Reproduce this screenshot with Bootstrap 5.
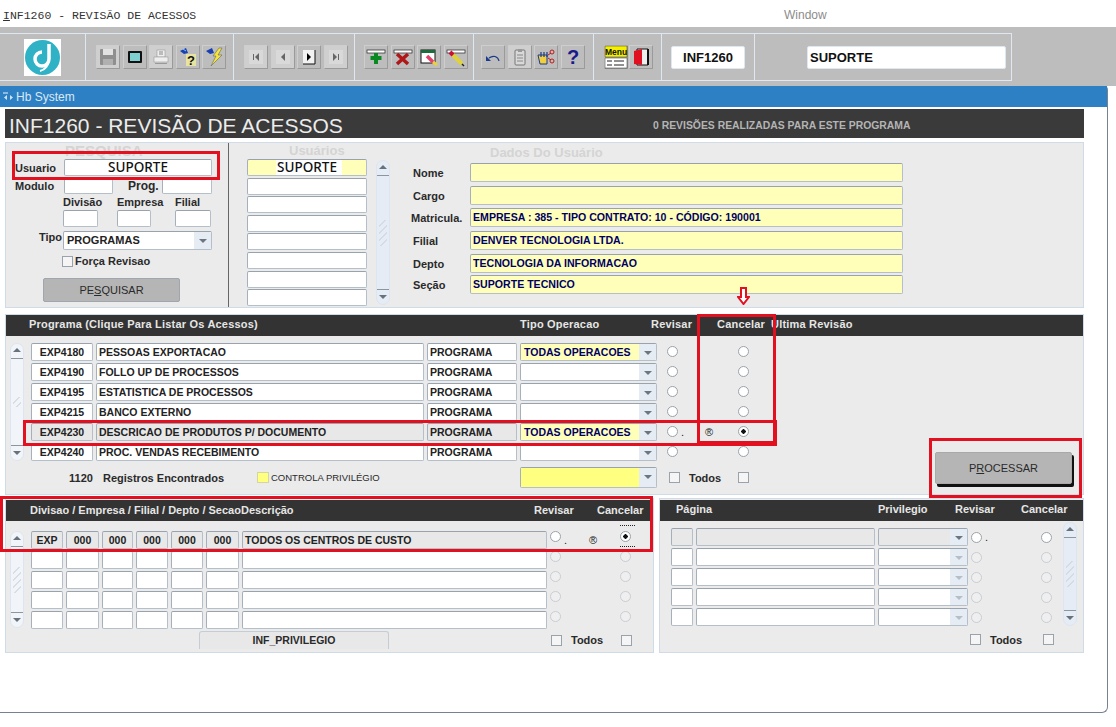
<!DOCTYPE html>
<html lang="en">
<head>
  <meta charset="UTF-8">
  <meta name="viewport" content="width=device-width, initial-scale=1.0">
  <title>INF1260 - Revisão de Acessos</title>
  <link href="https://cdn.jsdelivr.net/npm/bootstrap@5.3.0/dist/css/bootstrap.min.css" rel="stylesheet">
  <style>
    html, body { margin: 0; background: #fff; overflow: hidden; }
    #app { position: relative; width: 1116px; height: 727px; overflow: hidden; font: bold 11px "Liberation Sans", Arial, sans-serif; color: #2a2a2a; }

    .titlebar { height: 27px; align-items: center; padding: 3px 0 0 3px; font-weight: normal; }
    .titlebar .apptitle { width: 781px; font: 11.5px "Liberation Mono", monospace; color: #333; }
    .titlebar .winmenu { font: 12px "Liberation Sans", sans-serif; color: #8c8c8c; }

    .toolbar-wrap { height: 59px; background: #bdbdbd; padding-top: 6px; }
    .toolbar-in { width: 1012px; height: 48px; border: solid #dfe7f0; border-width: 1px 1px 1px 0; }
    .tgroup { height: 100%; border-right: 1px solid #dfe7f0; align-items: center; flex: none; gap: 2.5px; }
    .tg1 { width: 86px; padding-left: 24px; }
    .tg2 { width: 148px; padding-left: 10px; }
    .tg3 { width: 121px; padding-left: 10px; }
    .tg4 { width: 119px; padding-left: 9px; }
    .tg5 { width: 120px; padding-left: 7px; }
    .tg6 { width: 68px; padding-left: 10px; gap: 1px; }
    .tg7 { width: 93px; padding-left: 9px; }
    .tg8 { width: 257px; padding-left: 52px; border-right: 0; }
    .logo-box { width: 37px; height: 37px; background: #fff; }
    .tbtn { width: 24px; height: 24px; padding: 0; flex: none; border-radius: 1px; border: 1px solid #bdbdbd; border-right-color: #9a9a9a; border-bottom-color: #9a9a9a; border-top-color: #cecece; border-left-color: #cecece; background: #bdbdbd; display: flex; align-items: center; justify-content: center; }
    .tbtn.off { background: #cfcfcf; }
    .tbtn svg { overflow: visible; }
    .tfield { height: 23px; background: #fff; border: 1px solid #dfe7f0; border-radius: 2px; font-size: 13px; color: #111; display: flex; align-items: center; }
    .tf-code { width: 74px; justify-content: center; }
    .tf-user { width: 199px; padding-left: 2px; }

    .winframe { width: 1108px; height: 627px; background: #fff; border-right: 1px solid #76838f; border-bottom: 1px solid #76838f; border-radius: 0 4px 6px 0; }
    .bluebar { height: 21px; background: #2d80c3; color: #d9e8f4; font: 12px "Liberation Sans", sans-serif; padding: 1px 0 0 3px; gap: 2px; align-items: center; }
    .win-body { padding: 2px 0 0 5px; width: 1084px; }
    .headbar { height: 29px; background: #3a3a3a; color: #ececec; align-items: center; padding-left: 4px; }
    .headbar .main-title { width: 644px; font: 21px "Liberation Sans", sans-serif; padding-top: 5px; }
    .headbar .rev-count { font-size: 10.4px; color: #b4b4b4; padding-top: 3px; }

    .pane { background: #ebebeb; border: 1px solid #cfdbe6; }
    .pane-top { height: 166px; margin-top: 4px; }
    .pane-prog { height: 181px; margin-top: 6px; }
    .pane-row { margin-top: 3px; gap: 5px; }
    .pane-sub { height: 155px; }
    .pane-sub.left { width: 649px; }
    .pane-sub.right { width: 425px; }

    .fld { height: 18px; min-height: 0; padding: 0 0 0 2px; border: 1px solid #b4bfca; border-top-color: #99a3ad; border-left-color: #a6b0ba; border-radius: 2px; background: #fff; font: bold 10.5px "Liberation Sans", sans-serif; color: #222; line-height: 16px; white-space: nowrap; overflow: hidden; flex: none; box-shadow: none; }
    .fld.ctr { text-align: center; padding: 0; }
    .fld.big { font-size: 13.5px; font-family: "Noto Sans", sans-serif; font-weight: 500; color: #111; line-height: 15px; }
    .fld.yel { background: #ffffb9; color: #000066; }
    .fld.gry { background: #e8e8e8; }
    .fld.sel { display: flex; padding: 0; position: relative; }
    .fld.sel .seltxt { flex: 1; padding-left: 3px; overflow: hidden; }
    .fld.sel .selbtn { width: 17px; background: #e6ecf4; position: relative; }
    .fld.sel .selbtn::after { content: ""; position: absolute; left: 5px; top: 7px; border: 4px solid transparent; border-top: 4px solid #6c7680; border-bottom: 0; }
    .fld.sel.ghost .selbtn::after { border-top-color: #b6bec6; }
    .yel-bg { background: #ffffb9; color: #000066; }
    .yel-strong { background: #ffff80; }

    .rdo.form-check-input { width: 11px; height: 11px; margin: 0; float: none; border: 1px solid #9aa3ab; background-color: #fff; flex: none; opacity: 1; }
    .rdo.form-check-input:checked { background: radial-gradient(circle, #111 0 2px, #fff 2.4px); border-color: #9aa3ab; }
    .rdo.faded.form-check-input { border-color: #c8ced4; background-color: #efefef; }
    .cbx.form-check-input { width: 11px; height: 11px; margin: 0; float: none; border: 1px solid #9aa3ab; border-radius: 0; background-color: #f5f5f5; flex: none; }

    .sbar { width: 14px; flex: none; background: #f1f5fa; border: 1px solid #dde5ee; border-radius: 7px; display: flex; flex-direction: column; justify-content: space-between; align-items: center; }
    .sbar .sb-btn { width: 12px; height: 15px; position: relative; }
    .sbar .sb-up { border-bottom: 1px solid #8c969f; }
    .sbar .sb-down { border-top: 1px solid #8c969f; }
    .sbar .sb-btn::after { content: ""; position: absolute; left: 2px; border: 4px solid transparent; }
    .sbar .sb-up::after { top: 4px; border-bottom: 4px solid #67727c; border-top: 0; }
    .sbar .sb-down::after { top: 5px; border-top: 4px solid #67727c; border-bottom: 0; }
    .sbar .sb-grip { width: 8px; height: 26px; background: repeating-linear-gradient(135deg, transparent 0 4px, #cdd4db 4px 5px); opacity: .7; }
    .sbar.short-grip .sb-grip { height: 10px; }
    .sbar.tint { background: #e6ecf5; }

    /* painel pesquisa */
    .col-search { width: 223px; border-right: 1px solid #666; flex: none; padding-left: 9px; }
    .ghost-title { color: #d4d4d4; font-weight: bold; font-size: 15px; line-height: 16px; white-space: nowrap; }
    .col-search .ghost-title { height: 16px; padding-left: 50px; }
    .srow { display: flex; align-items: center; }
    .srow + .srow { margin-top: 2px; }
    .lbl-u { width: 49px; font-size: 11px; }
    .w-mod { width: 49px; height: 16px; }
    .lbl-prog { width: 34px; margin-left: 15px; font-size: 12px; }
    .w-prog { width: 50px; height: 16px; }
    .w-user { width: 148px; height: 17px; }
    .sgrid { display: grid; grid-template-columns: 54px 58px 36px; padding-left: 48px; }
    .sgrid .fld { height: 17px; }
    .w35 { width: 35px; }
    .w34 { width: 34px; }
    .w36 { width: 36px; }
    .lbl-tipo { width: 48px; text-align: right; padding-right: 1px; align-self: flex-start; }
    .tipo-row { margin-top: 4px !important; }
    .w-tipo { width: 149px; height: 19px; line-height: 17px; font-size: 11px; }
    .forca-row { margin-top: 5px !important; padding-left: 47px; gap: 2px; }
    .btn-hb { background: #b5b5b5; border: 1px solid #9ea7af; border-radius: 2px; color: #2a2a2a; font: 11px "Liberation Sans", sans-serif; padding: 0; }
    .btn-pesq { width: 137px; height: 24px; margin: 11px 0 0 28px; display: block; }

    .col-users { width: 176px; flex: none; padding-left: 18px; }
    .col-users .ghost-title { height: 16px; padding-left: 42px; font-size: 13px; }
    .users-flex { display: flex; gap: 9px; }
    .users-list .fld { width: 120px; height: 17px; margin-bottom: 1.6px; }
    .users-list .fld.big { background: linear-gradient(90deg, #ffffb9 0 28px, #fff 28px 94px, #ffffb9 94px); }
    .users-flex .sbar { height: 145px; margin-top: 1px; }

    .col-dados { flex: 1; padding-left: 5px; }
    .col-dados .ghost-title { height: 20px; padding: 2px 0 0 80px; font-size: 13px; }
    .drow { display: flex; align-items: center; height: 19px; }
    .drow .dlab { width: 60px; padding-left: 3px; font-size: 11px; white-space: nowrap; }
    .drow .dlab.tight { padding-left: 1px; }
    .drow .fld { width: 433px; height: 19px; line-height: 17px; font-size: 10.6px; }
    .drow:nth-child(3), .drow:nth-child(5), .drow:nth-child(6) { margin-top: 4px; }
    .drow:nth-child(4) { margin-top: 3px; }
    .drow:nth-child(7) { margin-top: 2px; }

    /* cabecalhos escuros */
    .darkhead { height: 21px; background: #333; color: #e6e6e6; position: relative; white-space: nowrap; font-size: 11px; display: grid; align-items: center; padding-bottom: 2px; }
    .dh-prog { grid-template-columns: 491px 131px 66px 54px auto; padding-left: 23px; letter-spacing: .2px; padding-bottom: 3px; }
    .dh-left { grid-template-columns: 211px 293px 63px auto; padding-left: 24px; margin-top: 1px; }
    .dh-right { grid-template-columns: 202px 77px 66px auto; padding-left: 16px; margin-top: 1px; padding-bottom: 3px; }

    /* programas */
    .prog-body { display: flex; }
    .prog-left { width: 743px; flex: none; padding: 7px 0 0 4px; }
    .prog-flex { display: flex; gap: 7px; }
    .prog-flex .sbar { height: 118px; }
    .prog-rows { display: flex; flex-direction: column; gap: 2px; }
    .prow { display: grid; grid-template-columns: 62px 328px 90px 137px 18px 54px 11px; column-gap: 3px; align-items: center; }
    .prow .rdo { margin-bottom: 2px; }
    .prow .rdo-first.form-check-input { margin-left: 7px; }
    .dot-cell { font-size: 11px; color: #222; font-weight: normal; line-height: 10px; display: flex; justify-content: space-between; }
    .prow .dot-cell { padding-right: 22px; }
    .lrow .dot-cell { padding-right: 20px; }
    .pfoot { display: grid; grid-template-columns: 59px 34px 154px 263px 137px 12px 11px 9px 49px 11px; align-items: center; margin-top: 6px; height: 21px; }
    .pfoot .fld { height: 21px; width: 137px; }
    .cp-wrap { display: flex; align-items: center; gap: 2px; }
    .box-cp { width: 12px; height: 11px; background: #ffff80; border: 1px solid #d5d5a0; }
    .txt-cp { font-size: 9.5px; font-weight: normal; white-space: nowrap; }
    .btn-proc { width: 137px; height: 32px; margin: 116px 0 0 186px; box-shadow: 2px 3px 0 #111; flex: none; display: block; border-color: #a9a9a9; }

    /* listas inferiores */
    .sub-flex { display: flex; gap: 7px; padding: 10px 0 0 4px; }
    .sub-flex .sbar { height: 97px; }
    .lrows, .rrows { display: flex; flex-direction: column; gap: 2px; }
    .lrow { display: grid; grid-template-columns: 32px 33px 31px 32px 32px 33px 305px 11px 53px 11px; column-gap: 3px; align-items: center; }
    .lrow .rdo, .lrow .focus-box { align-self: start; }
    .lfoot { display: grid; grid-template-columns: 168px 190px 162px 11px 9px 35px 15px 11px; align-items: center; margin-top: 2px; height: 18px; }
    .lfoot .inf-box { height: 18px; background: #e8e8e8; border: 1px solid #c4cdd6; border-bottom: 0; border-radius: 3px 3px 0 0; text-align: center; line-height: 17px; font-size: 10.5px; }
    .rrow { display: grid; grid-template-columns: 22px 179px 90px 11px 53px 11px; column-gap: 3px; align-items: center; }
    .rrow .fld.sel { width: 90px; }
    .right-flex { display: flex; padding: 7px 0 0 11px; gap: 9px; }
    .right-flex .sbar { height: 104px; margin-top: -6px; }
    .rfoot { display: grid; grid-template-columns: 299px 11px 9px 35px 18px 11px; align-items: center; margin-top: 7px; height: 13px; }

    /* radio com foco, linhas pontilhadas em cima e embaixo */
    .focus-box { position: relative; display: block; width: 11px; height: 11px; }
    .focus-box::before, .focus-box::after { content: ""; position: absolute; left: 0; width: 15px; border-top: 1px dotted #222; }
    .focus-box::before { top: -6px; }
    .focus-box::after { top: 15px; }

    /* anotacoes em vermelho sobre a tela */
    .redbox { position: absolute; border: 3px solid #e3101f; pointer-events: none; }
    .rb-user { left: 12px; top: 151px; width: 208px; height: 29px; }
    .rb-row { left: 23px; top: 420px; width: 754px; height: 26px; }
    .rb-canc { left: 697px; top: 314px; width: 79px; height: 130px; }
    .rb-proc { left: 929px; top: 438px; width: 153px; height: 60px; }
    .rb-sub { left: 0; top: 496px; width: 653px; height: 56px; }
    .red-arrow { position: absolute; left: 737px; top: 287px; }
  </style>
</head>
<body>
<div id="app">
  <div class="titlebar d-flex">
    <div class="apptitle"><u>I</u>NF1260 - REVISÃO DE ACESSOS</div>
    <div class="winmenu">Window</div>
  </div>

  <div class="toolbar-wrap">
    <div class="toolbar-in d-flex">
      <div class="tgroup tg1 d-flex">
        <div class="logo-box">
          <svg width="37" height="37" viewBox="0 0 37 37"><circle cx="18.5" cy="18.5" r="17.5" fill="#2fb1c6"/><path d="M25 5v15a7 7 0 1 1-7-7" fill="none" stroke="#fff" stroke-width="3.5"/><path d="M25 20c0 6-4 11-9 12" fill="none" stroke="#fff" stroke-width="2"/></svg>
        </div>
      </div>
      <div class="tgroup tg2 d-flex" id="g2"></div>
      <div class="tgroup tg3 d-flex" id="g3"></div>
      <div class="tgroup tg4 d-flex" id="g4"></div>
      <div class="tgroup tg5 d-flex" id="g5"></div>
      <div class="tgroup tg6 d-flex" id="g6"></div>
      <div class="tgroup tg7 d-flex"><div class="tfield tf-code">INF1260</div></div>
      <div class="tgroup tg8 d-flex"><div class="tfield tf-user">SUPORTE</div></div>
    </div>
  </div>

  <div class="winframe">
    <div class="bluebar d-flex">
      <svg width="11" height="11" viewBox="0 0 11 11"><path d="M1 5.500 4 3v5zM10 5.500 7 3v5z" fill="#cfe2f2"/><rect x="0" y="0" width="5" height="2" fill="#8db9de"/></svg>
      <span>Hb System</span>
    </div>
    <div class="win-body">
      <div class="headbar d-flex">
        <div class="main-title">INF1260 - REVISÃO DE ACESSOS</div>
        <div class="rev-count">0 REVISÕES REALIZADAS PARA ESTE PROGRAMA</div>
      </div>

      <div class="pane pane-top d-flex">
        <div class="col-search">
          <div class="ghost-title">PESQUISA</div>
          <div class="srow"><span class="lbl-u">Usuario</span><div class="form-control fld ctr big w-user">SUPORTE</div></div>
          <div class="srow"><span class="lbl-u">Modulo</span><div class="form-control fld w-mod"></div><span class="lbl-prog">Prog.</span><div class="form-control fld w-prog"></div></div>
          <div class="srow"><div class="sgrid"><span>Divisão</span><span>Empresa</span><span>Filial</span></div></div>
          <div class="srow"><div class="sgrid"><div class="form-control fld w35"></div><div class="form-control fld w34"></div><div class="form-control fld w36"></div></div></div>
          <div class="srow tipo-row"><span class="lbl-tipo">Tipo</span><div class="form-control fld sel w-tipo"><span class="seltxt">PROGRAMAS</span><span class="selbtn"></span></div></div>
          <div class="srow forca-row"><input class="form-check-input cbx" type="checkbox"><span>Força Revisao</span></div>
          <button class="btn btn-hb btn-pesq">PE<u>S</u>QUISAR</button>
        </div>
        <div class="col-users">
          <div class="ghost-title">Usuários</div>
          <div class="users-flex">
            <div class="users-list" id="users"></div>
            <div class="sbar tint"><div class="sb-btn sb-up"></div><div class="sb-grip"></div><div class="sb-btn sb-down"></div></div>
          </div>
        </div>
        <div class="col-dados">
          <div class="ghost-title">Dados Do Usuário</div>
          <div class="drow"><span class="dlab">Nome</span><div class="form-control fld yel"></div></div>
          <div class="drow"><span class="dlab">Cargo</span><div class="form-control fld yel"></div></div>
          <div class="drow"><span class="dlab tight">Matricula.</span><div class="form-control fld yel">EMPRESA : 385 - TIPO CONTRATO: 10 - CÓDIGO: 190001</div></div>
          <div class="drow"><span class="dlab">Filial</span><div class="form-control fld yel">DENVER TECNOLOGIA LTDA.</div></div>
          <div class="drow"><span class="dlab">Depto</span><div class="form-control fld yel">TECNOLOGIA DA INFORMACAO</div></div>
          <div class="drow"><span class="dlab">Seção</span><div class="form-control fld yel">SUPORTE TECNICO</div></div>
        </div>
      </div>

      <div class="pane pane-prog">
        <div class="darkhead dh-prog"><span>Programa (Clique Para Listar Os Acessos)</span><span>Tipo Operacao</span><span>Revisar</span><span>Cancelar</span><span>Ultima Revisão</span></div>
        <div class="prog-body">
          <div class="prog-left">
            <div class="prog-flex">
              <div class="sbar short-grip"><div class="sb-btn sb-up"></div><div class="sb-grip"></div><div class="sb-btn sb-down"></div></div>
              <div class="prog-rows" id="progRows"></div>
            </div>
            <div class="pfoot">
              <span></span><span>1120</span><span>Registros Encontrados</span>
              <span class="cp-wrap"><span class="box-cp"></span><span class="txt-cp">CONTROLA PRIVILÉGIO</span></span>
              <div class="form-control fld sel"><span class="seltxt yel-strong"></span><span class="selbtn"></span></div>
              <span></span><input class="form-check-input cbx" type="checkbox"><span></span><span>Todos</span><input class="form-check-input cbx" type="checkbox">
            </div>
          </div>
          <button class="btn btn-hb btn-proc">P<u>R</u>OCESSAR</button>
        </div>
      </div>

      <div class="pane-row d-flex">
        <div class="pane pane-sub left">
          <div class="darkhead dh-left"><span>Divisao / Empresa / Filial / Depto / Secao</span><span>Descrição</span><span>Revisar</span><span>Cancelar</span></div>
          <div class="sub-flex">
            <div class="sbar"><div class="sb-btn sb-up"></div><div class="sb-grip"></div><div class="sb-btn sb-down"></div></div>
            <div>
              <div class="lrows" id="leftRows"></div>
              <div class="lfoot"><span></span><div class="inf-box">INF_PRIVILEGIO</div><span></span><input class="form-check-input cbx" type="checkbox"><span></span><span>Todos</span><span></span><input class="form-check-input cbx" type="checkbox"></div>
            </div>
          </div>
        </div>
        <div class="pane pane-sub right">
          <div class="darkhead dh-right"><span>Página</span><span>Privilegio</span><span>Revisar</span><span>Cancelar</span></div>
          <div class="right-flex">
            <div>
              <div class="rrows" id="rightRows"></div>
              <div class="rfoot"><span></span><input class="form-check-input cbx" type="checkbox"><span></span><span>Todos</span><span></span><input class="form-check-input cbx" type="checkbox"></div>
            </div>
            <div class="sbar tint"><div class="sb-btn sb-up"></div><div class="sb-grip"></div><div class="sb-btn sb-down"></div></div>
          </div>
        </div>
      </div>
    </div>
  </div>

  <!-- anotacoes -->
  <div class="redbox rb-user"></div>
  <div class="redbox rb-row"></div>
  <div class="redbox rb-canc"></div>
  <div class="redbox rb-proc"></div>
  <div class="redbox rb-sub"></div>
  <svg class="red-arrow" width="13" height="18" viewBox="0 0 13 18"><path d="M4 1h5v9h3l-5.500 7L1 10h3z" fill="#fff" stroke="#e3101f" stroke-width="2"/></svg>
</div>

<script>
  const icons = {
    save: '<rect x="2" y="2" width="16" height="16" rx="1" fill="#8f8f8f"/><rect x="5" y="2" width="10" height="6" fill="#e2e2e2"/><rect x="5" y="12" width="10" height="6" fill="#b0b0b0"/>',
    screen: '<rect x="3" y="4" width="14" height="12" rx="1" fill="#111"/><rect x="5" y="6" width="10" height="8" fill="#7fd0d0"/>',
    print: '<rect x="6" y="3" width="8" height="7" fill="#eee" stroke="#999" stroke-width=".6"/><path d="M8 5h4M8 7h4" stroke="#888"/><rect x="3" y="10" width="14" height="5" fill="#eee" stroke="#999" stroke-width=".6"/><rect x="4" y="16" width="12" height="1" fill="#999"/>',
    qask: '<path d="M2 4l6-3 2 5-4 1z" fill="#1a3fb0"/><path d="M5 2l3 2" stroke="#7fd0ff"/><rect x="8" y="7" width="10" height="12" fill="#e9e3a0"/><text x="13" y="18" text-anchor="middle" font-family="Liberation Sans" font-weight="bold" font-size="13" fill="#111">?</text>',
    qrun: '<path d="M2 4l6-3 2 5-4 1z" fill="#1a3fb0"/><path d="M15 1l-6 8h3l-5 10 11-11h-4l4-7z" fill="#f6e53a" stroke="#555" stroke-width=".5"/>',
    first: '<rect x="3" y="3" width="14" height="14" fill="#d9d9d9"/><rect x="7" y="7" width="1" height="6" fill="#666"/><path d="M13 6v8l-4-4z" fill="#666"/>',
    prev: '<rect x="3" y="3" width="14" height="14" fill="#d9d9d9"/><path d="M12 6v8l-4-4z" fill="#666"/>',
    next: '<rect x="4" y="3" width="12" height="14" fill="#f2f2f2"/><path d="M8 6v8l4-4z" fill="#000"/><path d="M4 17h12V3" fill="none" stroke="#111"/>',
    last: '<rect x="3" y="3" width="14" height="14" fill="#d9d9d9"/><path d="M7 6v8l4-4z" fill="#666"/><rect x="12" y="7" width="1" height="6" fill="#666"/>',
    add: '<rect x="1" y="3" width="18" height="3" fill="#fff" stroke="#222" stroke-width=".7"/><path d="M10 6v11M4.500 11h11" stroke="#0b8a24" stroke-width="4"/>',
    del: '<rect x="1" y="3" width="18" height="3" fill="#fff" stroke="#222" stroke-width=".7"/><path d="M4 7l11 10M15 7L4 17" stroke="#b01818" stroke-width="3.500"/>',
    qry: '<rect x="2" y="3" width="14" height="13" fill="#fff" stroke="#111"/><rect x="2" y="3" width="14" height="3" fill="#1c6b3c"/><path d="M8 9l7 7" stroke="#e0406a" stroke-width="3.500"/><path d="M14 15l4 3" stroke="#e8d23c" stroke-width="3"/>',
    edit: '<rect x="1" y="3" width="18" height="3" fill="#fff" stroke="#222" stroke-width=".7"/><path d="M6 7l10 10" stroke="#e0d23a" stroke-width="4"/><path d="M4 5l3 3" stroke="#c8103a" stroke-width="4"/><path d="M16 17l2 2" stroke="#222" stroke-width="1.500"/>',
    undo: '<path d="M16 14c-1-5-6-6-10-3" fill="none" stroke="#1b3a8c" stroke-width="1.200"/><path d="M3 9v5h5z" fill="#1b3a8c"/>',
    clip: '<rect x="5" y="3" width="10" height="15" rx="1" fill="#d9d9d9" stroke="#777"/><rect x="8" y="2" width="4" height="3" fill="#999"/><path d="M7 8h6M7 11h6M7 14h6" stroke="#888"/>',
    hand: '<path d="M2 8h9v9H4z" fill="#f0d040" stroke="#1b3a8c"/><path d="M5 5v5M8 5v5M11 5v5" stroke="#1b3a8c" stroke-width="1.200"/><circle cx="16" cy="5" r="2" fill="none" stroke="#c01818"/><circle cx="16" cy="14" r="2" fill="none" stroke="#c01818"/><path d="M12 8l3-2M12 11l3 2" stroke="#c01818"/>',
    help: '<text x="10" y="17" text-anchor="middle" font-family="Liberation Sans" font-weight="bold" font-size="20" fill="#1a1a8c">?</text>',
    menu: '<rect x="-1" y="-1" width="22" height="11" fill="#f4f000" stroke="#333" stroke-width=".5"/><text x="10" y="8" text-anchor="middle" font-family="Liberation Sans" font-weight="bold" font-size="8.500" fill="#111">Menu</text><rect x="-1" y="11" width="22" height="10" fill="#fff" stroke="#333" stroke-width=".5"/><path d="M1 14h5M8 14h10M1 18h5M8 18h10" stroke="#222"/>',
    exit: '<path d="M6 2h11v16H6z" fill="#eee" stroke="#111"/><path d="M3 4l8-2v16l-8-1z" fill="#e01020"/><path d="M17 2v16" stroke="#111" stroke-width="2"/>'
  };

  function tbtn(name, off) {
    return `<button class="tbtn${off ? ' off' : ''}" type="button"><svg width="20" height="20" viewBox="0 0 20 20">${icons[name]}</svg></button>`;
  }
  function fill(id, list) {
    document.getElementById(id).innerHTML = list.map(i => tbtn(i[0], i[1])).join('');
  }
  fill('g2', [['save', 1], ['screen'], ['print', 1], ['qask'], ['qrun']]);
  fill('g3', [['first', 1], ['prev', 1], ['next'], ['last', 1]]);
  fill('g4', [['add'], ['del'], ['qry'], ['edit']]);
  fill('g5', [['undo'], ['clip', 1], ['hand'], ['help']]);
  fill('g6', [['menu'], ['exit']]);

  // lista de usuarios
  let users = '<div class="form-control fld ctr big">SUPORTE</div>';
  for (let i = 0; i < 7; i++) users += '<div class="form-control fld"></div>';
  document.getElementById('users').innerHTML = users;

  // programas
  const programas = [
    ['EXP4180', 'PESSOAS EXPORTACAO', 'TODAS OPERACOES'],
    ['EXP4190', 'FOLLO UP DE PROCESSOS', ''],
    ['EXP4195', 'ESTATISTICA DE PROCESSOS', ''],
    ['EXP4215', 'BANCO EXTERNO', ''],
    ['EXP4230', 'DESCRICAO DE PRODUTOS P/ DOCUMENTO', 'TODAS OPERACOES'],
    ['EXP4240', 'PROC. VENDAS RECEBIMENTO', '']
  ];
  document.getElementById('progRows').innerHTML = programas.map((p, i) => {
    const on = i === 4;
    const cls = on ? ' gry' : '';
    return `<div class="prow">
      <div class="form-control fld ctr${cls}">${p[0]}</div>
      <div class="form-control fld${cls}">${p[1]}</div>
      <div class="form-control fld${cls}">PROGRAMA</div>
      <div class="form-control fld sel${cls}"><span class="seltxt${p[2] ? ' yel-bg' : ''}">${p[2]}</span><span class="selbtn"></span></div>
      <input class="form-check-input rdo rdo-first" type="radio" name="p${i}">
      <span class="dot-cell">${on ? '<span>.</span><span>®</span>' : ''}</span>
      <input class="form-check-input rdo" type="radio" name="p${i}"${on ? ' checked' : ''}>
    </div>`;
  }).join('');

  // centros de custo
  let left = '';
  for (let i = 0; i < 5; i++) {
    const v = i === 0 ? ['EXP', '000', '000', '000', '000', '000', 'TODOS OS CENTROS DE CUSTO'] : ['', '', '', '', '', '', ''];
    const cls = i === 0 ? ' gry' : '';
    const faded = i === 0 ? '' : ' faded';
    const cancel = `<input class="form-check-input rdo${faded}" type="radio" name="l${i}"${i === 0 ? ' checked' : ''}>`;
    left += '<div class="lrow">' + v.map((t, n) => `<div class="form-control fld${n < 6 ? ' ctr' : ''}${cls}">${t}</div>`).join('') +
      `<input class="form-check-input rdo${faded}" type="radio" name="l${i}">
       <span class="dot-cell">${i === 0 ? '<span>.</span><span>®</span>' : ''}</span>
       ${i === 0 ? `<span class="focus-box">${cancel}</span>` : cancel}</div>`;
  }
  document.getElementById('leftRows').innerHTML = left;

  // paginas
  let right = '';
  for (let i = 0; i < 5; i++) {
    const cls = i === 0 ? ' gry' : '';
    const faded = i === 0 ? '' : ' faded';
    right += `<div class="rrow">
      <div class="form-control fld${cls}"></div>
      <div class="form-control fld${cls}"></div>
      <div class="form-control fld sel${cls}${i ? ' ghost' : ''}"><span class="seltxt"></span><span class="selbtn"></span></div>
      <input class="form-check-input rdo${faded}" type="radio" name="r${i}">
      <span class="dot-cell">${i === 0 ? '<span>.</span>' : ''}</span>
      <input class="form-check-input rdo${faded}" type="radio" name="r${i}">
    </div>`;
  }
  document.getElementById('rightRows').innerHTML = right;
</script>
<script src="https://cdn.jsdelivr.net/npm/bootstrap@5.3.0/dist/js/bootstrap.bundle.min.js"></script>
</body>
</html>
